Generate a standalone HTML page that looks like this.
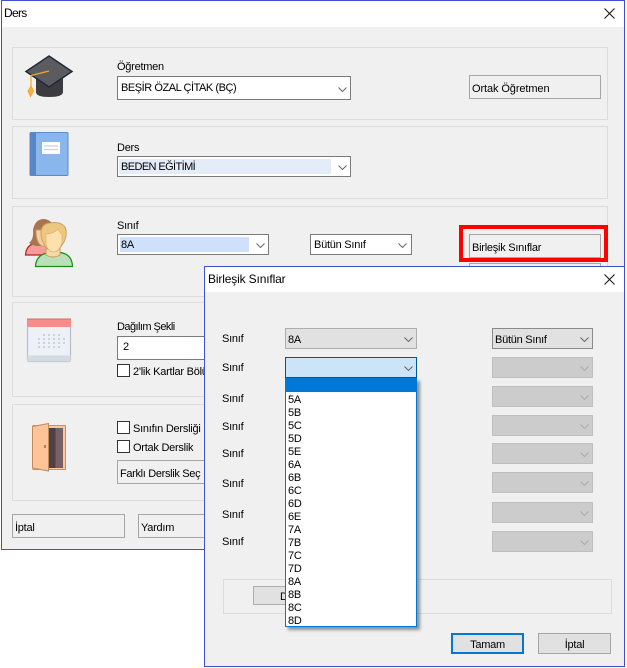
<!DOCTYPE html>
<html><head><meta charset="utf-8"><style>
html,body{margin:0;padding:0;width:627px;height:668px;overflow:hidden;background:#fff}
*{box-sizing:border-box}
body{position:relative;font-family:"Liberation Sans",sans-serif;font-size:11px;letter-spacing:-.25px;color:#000}
div,svg{position:absolute}
.t{white-space:nowrap;line-height:14px;height:14px;margin-top:1px}
.win{background:#f0f0f0;border:1px solid #3f51cf;overflow:hidden}
.bar{left:0;top:0;right:0;background:#fff}
.g{border:1px solid #dcdcdc}
.cb{background:#fff;border:1px solid #7a7a7a}
.btn{background:#f0f0f0;border:1px solid #a6a6a6}
.chk{width:13px;height:13px;background:#fff;border:1px solid #333}
.dis{background:#ccc;border:1px solid #bfbfbf;left:492px;width:101px;height:21px}
</style></head><body>

<div class="win" style="left:1px;top:0;width:624px;height:550px">
<div class="bar" style="height:26px"></div>
</div>
<div style="left:0;top:0;width:627px;height:668px">
<div class="t" style="left:4px;top:6px;margin-top:0;font-size:12px;letter-spacing:-.7px">Ders</div>
<svg style="left:604px;top:8px" width="11" height="11"><path d="M.5.5l10 10M10.5.5l-10 10" stroke="#111" fill="none"/></svg>

<div class="g" style="left:12px;top:47px;width:596px;height:73px"></div>
<div class="g" style="left:12px;top:126px;width:596px;height:73px"></div>
<div class="g" style="left:12px;top:206px;width:596px;height:91px"></div>
<div class="g" style="left:12px;top:302px;width:596px;height:95px"></div>
<div class="g" style="left:12px;top:404px;width:596px;height:97px"></div>

<svg style="left:20px;top:50px" width="60" height="52" viewBox="20 50 60 52">
<path d="M36 75H63V92Q63 97 49 97Q36 97 36 92Z" fill="#3c3c40"/>
<path d="M49 56L72 71.500L49 87L26 71.500Z" fill="#5c5c60" stroke="#1f2a38" stroke-width="1.500"/>
<path d="M49 71L31 75.500V87" fill="none" stroke="#f5a623" stroke-width="1.200"/>
<path d="M31 86L33.500 91L30.500 96.500L28 91Z" fill="#f8b040" stroke="#f5a623"/>
</svg>

<svg style="left:28px;top:130px" width="42" height="48">
<rect x="2" y="2.500" width="38" height="43" rx="1" fill="#8ab6ee" stroke="#5d8bc8"/>
<rect x="2" y="2.500" width="6" height="43" fill="#5a86c4"/>
<rect x="14" y="12" width="18" height="12" fill="#fff"/>
<path d="M16 16H30M16 19.500H30" stroke="#c4d2e2" stroke-width="1.300"/>
</svg>

<svg style="left:22px;top:215px" width="54" height="54" viewBox="22 215 54 54">
<path d="M25.500 255Q26 244 38 242.500H44Q50 244 50 255Z" fill="#f89a9a" stroke="#b81c1c" stroke-width="1.200"/>
<path d="M29 243Q34 239 33 230Q35 219 44 219Q54 220 54 232V246H36Q32 245 29 243Z" fill="#a9754d"/>
<path d="M36 230H52V240Q48 247 42 246Q36 243 36 230Z" fill="#f5cf9d" stroke="#c99d60"/>
<path d="M35.500 266.500Q36 254 50 252.500H60Q72 254 72.500 266.500Z" fill="#b9e0b8" stroke="#198c19" stroke-width="1.200"/>
<path d="M46 249H60V255Q53 259 46 255Z" fill="#f8d9a6" stroke="#c99d60"/>
<path d="M42 240Q38 224 50 223Q60 221 65 227Q68 234 64 242L60 248H46Z" fill="#eec883" stroke="#c9a262"/>
<path d="M46 234Q53 234 58 229Q60 233 62 234V243Q59 252 53.500 252Q48 252 46 244Z" fill="#fde0ac" stroke="#d8aa68" stroke-width=".6"/>
</svg>

<svg style="left:25px;top:317px" width="48" height="48">
<rect x="2.500" y="2.500" width="43" height="42" rx="1.500" fill="#edf1f6" stroke="#b6c0cb" stroke-width="1.200"/>
<path d="M2.500 38.500H45.500V44.500H2.500Z" fill="#d4dae2"/>
<rect x="2" y="2" width="44" height="8" fill="#f98b8b"/>
<path d="M2 2H46" stroke="#d86a6a"/>
<g fill="#c6d3e0"><path d="M18 17h2v2h-2zM23 17h2v2h-2zM28 17h2v2h-2zM33 17h2v2h-2zM13 21h2v2h-2zM18 21h2v2h-2zM23 21h2v2h-2zM28 21h2v2h-2zM33 21h2v2h-2zM38 21h2v2h-2zM13 25h2v2h-2zM18 25h2v2h-2zM23 25h2v2h-2zM28 25h2v2h-2zM33 25h2v2h-2zM38 25h2v2h-2zM13 29h2v2h-2zM18 29h2v2h-2zM23 29h2v2h-2zM28 29h2v2h-2zM33 29h2v2h-2z"/></g>
</svg>

<svg style="left:30px;top:421px" width="38" height="52" viewBox="30 421 38 52">
<path d="M33 425.500H65.500V469.500H33Z" fill="#fcc79b" stroke="#c8916a"/>
<rect x="49" y="428" width="6.500" height="40" fill="#4f4045"/>
<rect x="55.500" y="428" width="7.500" height="40" fill="#786064"/>
<path d="M32.500 426.500L48.500 423.500V471L32.500 468Z" fill="#fec397" stroke="#c28a60"/>
<rect x="44" y="445" width="2" height="3" fill="#b47c54"/>
</svg>

<div class="t" style="left:117px;top:60px;margin-top:0">Öğretmen</div>
<div class="cb" style="left:117px;top:76px;width:234px;height:24px"></div>
<div class="t" style="left:121px;top:80px;letter-spacing:-.45px">BEŞİR ÖZAL ÇİTAK (BÇ)</div>
<svg style="left:338px;top:87px" width="9" height="5"><path d="M.5.5l4 4 4-4" fill="none" stroke="#666"/></svg>
<div class="btn" style="left:469px;top:75px;width:132px;height:24px"></div>
<div class="t" style="left:472px;top:81px;letter-spacing:-.1px">Ortak Öğretmen</div>

<div class="t" style="left:117px;top:140px">Ders</div>
<div class="cb" style="left:117px;top:156px;width:234px;height:21px"></div>
<div style="left:119px;top:159px;width:212px;height:15px;background:#e5ecf9"></div>
<div class="t" style="left:121px;top:159px;letter-spacing:-.6px">BEDEN EĞİTİMİ</div>
<svg style="left:338px;top:165px" width="9" height="5"><path d="M.5.5l4 4 4-4" fill="none" stroke="#666"/></svg>

<div class="t" style="left:117px;top:218px">Sınıf</div>
<div class="cb" style="left:117px;top:234px;width:152px;height:21px"></div>
<div style="left:120px;top:237px;width:129px;height:15px;background:#cfe0fa"></div>
<div class="t" style="left:121px;top:237px">8A</div>
<svg style="left:256px;top:243px" width="9" height="5"><path d="M.5.5l4 4 4-4" fill="none" stroke="#666"/></svg>
<div class="cb" style="left:310px;top:234px;width:102px;height:21px"></div>
<div class="t" style="left:314px;top:237px">Bütün Sınıf</div>
<svg style="left:398px;top:243px" width="9" height="5"><path d="M.5.5l4 4 4-4" fill="none" stroke="#666"/></svg>
<div class="btn" style="left:469px;top:234px;width:132px;height:24px"></div>
<div class="t" style="left:472px;top:240px">Birleşik Sınıflar</div>
<div class="btn" style="left:469px;top:263px;width:132px;height:24px"></div>
<div style="left:459px;top:225px;width:149px;height:37px;border:4px solid #f00"></div>

<div class="t" style="left:117px;top:319px;letter-spacing:-.55px">Dağılım Şekli</div>
<div class="cb" style="left:117px;top:336px;width:120px;height:24px"></div>
<div class="t" style="left:123px;top:339px">2</div>
<div class="chk" style="left:117px;top:364px"></div>
<div class="t" style="left:133px;top:364px">2'lik Kartlar Bölümü</div>

<div class="chk" style="left:117px;top:421px"></div>
<div class="t" style="left:133px;top:421px">Sınıfın Dersliği</div>
<div class="chk" style="left:117px;top:440px"></div>
<div class="t" style="left:133px;top:440px">Ortak Derslik</div>
<div class="btn" style="left:117px;top:460px;width:120px;height:24px"></div>
<div class="t" style="left:120px;top:466px;letter-spacing:-.33px">Farklı Derslik Seç</div>
<div class="btn" style="left:12px;top:514px;width:113px;height:24px"></div>
<div class="t" style="left:15px;top:520px">İptal</div>
<div class="btn" style="left:138px;top:514px;width:100px;height:24px"></div>
<div class="t" style="left:141px;top:520px">Yardım</div>
</div>

<!-- Dialog -->
<div class="win" style="left:204px;top:266px;width:421px;height:401px;background:#f0f0f0"></div>
<div style="left:205px;top:267px;width:419px;height:25px;background:#fff"></div>
<div class="t" style="left:208px;top:272px;margin-top:0;font-size:12px;letter-spacing:-.15px">Birleşik Sınıflar</div>
<svg style="left:604px;top:274px" width="11" height="11"><path d="M.5.5l10 10M10.5.5l-10 10" stroke="#111" fill="none"/></svg>

<div class="t" style="left:222px;top:331px">Sınıf</div>
<div class="t" style="left:222px;top:360px">Sınıf</div>
<div class="t" style="left:222px;top:391px">Sınıf</div>
<div class="t" style="left:222px;top:419px">Sınıf</div>
<div class="t" style="left:222px;top:446px">Sınıf</div>
<div class="t" style="left:222px;top:476px">Sınıf</div>
<div class="t" style="left:222px;top:507px">Sınıf</div>
<div class="t" style="left:222px;top:534px">Sınıf</div>

<div style="left:285px;top:328px;width:132px;height:21px;background:#e1e1e1;border:1px solid #adadad"></div>
<div class="t" style="left:288px;top:332px">8A</div>
<svg style="left:404px;top:337px" width="9" height="5"><path d="M.5.5l4 4 4-4" fill="none" stroke="#666"/></svg>

<div style="left:285px;top:357px;width:132px;height:21px;background:#cce4f7;border:1px solid #005499"></div>
<svg style="left:404px;top:366px" width="9" height="5"><path d="M.5.5l4 4 4-4" fill="none" stroke="#666"/></svg>

<div style="left:492px;top:328px;width:101px;height:21px;background:#e1e1e1;border:1px solid #8a8a8a"></div>
<div class="t" style="left:495px;top:332px">Bütün Sınıf</div>
<svg style="left:580px;top:337px" width="9" height="5"><path d="M.5.5l4 4 4-4" fill="none" stroke="#666"/></svg>

<div class="dis" style="top:357px"></div>
<div class="dis" style="top:386px"></div>
<div class="dis" style="top:415px"></div>
<div class="dis" style="top:443px"></div>
<div class="dis" style="top:472px"></div>
<div class="dis" style="top:502px"></div>
<div class="dis" style="top:531px"></div>
<svg style="left:580px;top:366px" width="9" height="5"><path d="M.5.5l4 4 4-4" fill="none" stroke="#aaa"/></svg>
<svg style="left:580px;top:395px" width="9" height="5"><path d="M.5.5l4 4 4-4" fill="none" stroke="#aaa"/></svg>
<svg style="left:580px;top:424px" width="9" height="5"><path d="M.5.5l4 4 4-4" fill="none" stroke="#aaa"/></svg>
<svg style="left:580px;top:452px" width="9" height="5"><path d="M.5.5l4 4 4-4" fill="none" stroke="#aaa"/></svg>
<svg style="left:580px;top:481px" width="9" height="5"><path d="M.5.5l4 4 4-4" fill="none" stroke="#aaa"/></svg>
<svg style="left:580px;top:511px" width="9" height="5"><path d="M.5.5l4 4 4-4" fill="none" stroke="#aaa"/></svg>
<svg style="left:580px;top:540px" width="9" height="5"><path d="M.5.5l4 4 4-4" fill="none" stroke="#aaa"/></svg>

<div class="g" style="left:223px;top:579px;width:389px;height:35px"></div>
<div style="left:253px;top:586px;width:40px;height:19px;background:#e1e1e1;border:1px solid #adadad"></div>
<div class="t" style="left:280px;top:589px">D</div>

<div style="left:285px;top:378px;width:132px;height:249px;background:#fff;border:1px solid #0078d7;box-shadow:3px 3px 3px rgba(0,0,0,.4)"></div>
<div style="left:286px;top:378px;width:130px;height:14px;background:#0078d7"></div>
<div class="t" style="left:288px;top:392px">5A</div>
<div class="t" style="left:288px;top:405px">5B</div>
<div class="t" style="left:288px;top:418px">5C</div>
<div class="t" style="left:288px;top:431px">5D</div>
<div class="t" style="left:288px;top:444px">5E</div>
<div class="t" style="left:288px;top:457px">6A</div>
<div class="t" style="left:288px;top:470px">6B</div>
<div class="t" style="left:288px;top:483px">6C</div>
<div class="t" style="left:288px;top:496px">6D</div>
<div class="t" style="left:288px;top:509px">6E</div>
<div class="t" style="left:288px;top:522px">7A</div>
<div class="t" style="left:288px;top:535px">7B</div>
<div class="t" style="left:288px;top:548px">7C</div>
<div class="t" style="left:288px;top:561px">7D</div>
<div class="t" style="left:288px;top:574px">8A</div>
<div class="t" style="left:288px;top:587px">8B</div>
<div class="t" style="left:288px;top:600px">8C</div>
<div class="t" style="left:288px;top:613px">8D</div>

<div style="left:451px;top:633px;width:73px;height:21px;background:#e1e1e1;border:2px solid #0078d7"></div>
<div class="t" style="left:451px;top:637px;width:73px;text-align:center">Tamam</div>
<div style="left:538px;top:633px;width:73px;height:21px;background:#e1e1e1;border:1px solid #a6a6a6"></div>
<div class="t" style="left:538px;top:637px;width:73px;text-align:center">İptal</div>
</body></html>
